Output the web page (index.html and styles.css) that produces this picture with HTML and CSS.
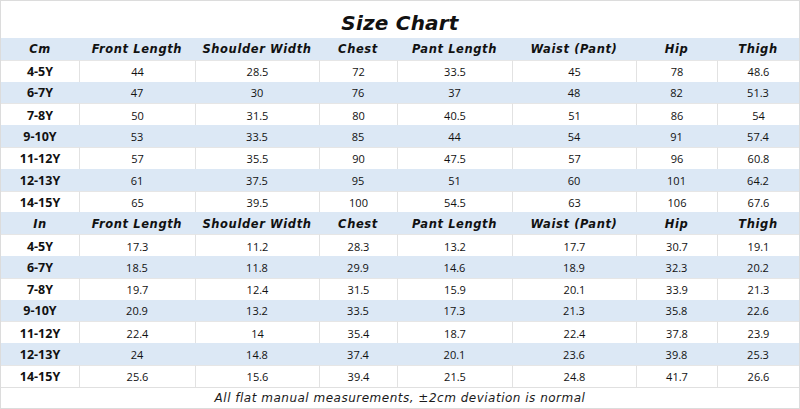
FILE: index.html
```html
<!DOCTYPE html>
<html>
<head>
<meta charset="utf-8">
<link rel="stylesheet" href="styles.css">
</head>
<body>
<div class="chart">
  <div class="title">Size Chart</div>

  <div class="row head">
    <div>Cm</div><div>Front Length</div><div>Shoulder Width</div><div>Chest</div><div>Pant Length</div><div>Waist (Pant)</div><div>Hip</div><div>Thigh</div>
  </div>
  <div class="row white"><div class="lbl">4-5Y</div><div>44</div><div>28.5</div><div>72</div><div>33.5</div><div>45</div><div>78</div><div>48.6</div></div>
  <div class="row blue"><div class="lbl">6-7Y</div><div>47</div><div>30</div><div>76</div><div>37</div><div>48</div><div>82</div><div>51.3</div></div>
  <div class="row white"><div class="lbl">7-8Y</div><div>50</div><div>31.5</div><div>80</div><div>40.5</div><div>51</div><div>86</div><div>54</div></div>
  <div class="row blue"><div class="lbl">9-10Y</div><div>53</div><div>33.5</div><div>85</div><div>44</div><div>54</div><div>91</div><div>57.4</div></div>
  <div class="row white"><div class="lbl">11-12Y</div><div>57</div><div>35.5</div><div>90</div><div>47.5</div><div>57</div><div>96</div><div>60.8</div></div>
  <div class="row blue"><div class="lbl">12-13Y</div><div>61</div><div>37.5</div><div>95</div><div>51</div><div>60</div><div>101</div><div>64.2</div></div>
  <div class="row white"><div class="lbl">14-15Y</div><div>65</div><div>39.5</div><div>100</div><div>54.5</div><div>63</div><div>106</div><div>67.6</div></div>

  <div class="row head">
    <div>In</div><div>Front Length</div><div>Shoulder Width</div><div>Chest</div><div>Pant Length</div><div>Waist (Pant)</div><div>Hip</div><div>Thigh</div>
  </div>
  <div class="row white"><div class="lbl">4-5Y</div><div>17.3</div><div>11.2</div><div>28.3</div><div>13.2</div><div>17.7</div><div>30.7</div><div>19.1</div></div>
  <div class="row blue"><div class="lbl">6-7Y</div><div>18.5</div><div>11.8</div><div>29.9</div><div>14.6</div><div>18.9</div><div>32.3</div><div>20.2</div></div>
  <div class="row white"><div class="lbl">7-8Y</div><div>19.7</div><div>12.4</div><div>31.5</div><div>15.9</div><div>20.1</div><div>33.9</div><div>21.3</div></div>
  <div class="row blue"><div class="lbl">9-10Y</div><div>20.9</div><div>13.2</div><div>33.5</div><div>17.3</div><div>21.3</div><div>35.8</div><div>22.6</div></div>
  <div class="row white"><div class="lbl">11-12Y</div><div>22.4</div><div>14</div><div>35.4</div><div>18.7</div><div>22.4</div><div>37.8</div><div>23.9</div></div>
  <div class="row blue"><div class="lbl">12-13Y</div><div>24</div><div>14.8</div><div>37.4</div><div>20.1</div><div>23.6</div><div>39.8</div><div>25.3</div></div>
  <div class="row white"><div class="lbl">14-15Y</div><div>25.6</div><div>15.6</div><div>39.4</div><div>21.5</div><div>24.8</div><div>41.7</div><div>26.6</div></div>

  <div class="footer">All flat manual measurements, ±2cm deviation is normal</div>
</div>
</body>
</html>
```

FILE: styles.css
```css
html, body {
  margin: 0;
  padding: 0;
  background: #ffffff;
}

.chart {
  box-sizing: border-box;
  width: 800px;
  height: 409px;
  border: 1px solid #dcdcdc;
  display: grid;
  grid-template-rows: 37px repeat(16, 21.8px) 1fr;
  color: #111;
  font-family: "Open Sans", sans-serif;
}

.title {
  display: flex;
  align-items: flex-end;
  justify-content: center;
  padding-bottom: 3px;
  font-family: "DejaVu Sans", sans-serif;
  font-weight: bold;
  font-style: italic;
  font-size: 20px;
  letter-spacing: 0.2px;
}

.row {
  display: grid;
  grid-template-columns: 78px 116px 124px 78px 115px 124px 81px 1fr;
}

.row > div {
  box-sizing: border-box;
  display: flex;
  align-items: center;
  justify-content: center;
  padding-top: 1px;
  font-size: 11px;
  white-space: nowrap;
}

.head, .blue {
  background: #dce8f5;
}

.white > div {
  border-top: 1px solid #e6e6e6;
}

.white > div + div {
  border-left: 1px solid #e2e2e2;
}

.head > div {
  font-family: "DejaVu Sans", sans-serif;
  font-weight: bold;
  font-style: italic;
  font-size: 11.5px;
  letter-spacing: 0.6px;
}

.row > .lbl {
  font-weight: bold;
  font-size: 12.5px;
}

.footer {
  display: flex;
  align-items: center;
  justify-content: center;
  border-top: 1px solid #e0e0e0;
  font-family: "DejaVu Sans", sans-serif;
  font-style: italic;
  font-size: 12px;
  letter-spacing: 0.5px;
  color: #1a1a1a;
}
```
